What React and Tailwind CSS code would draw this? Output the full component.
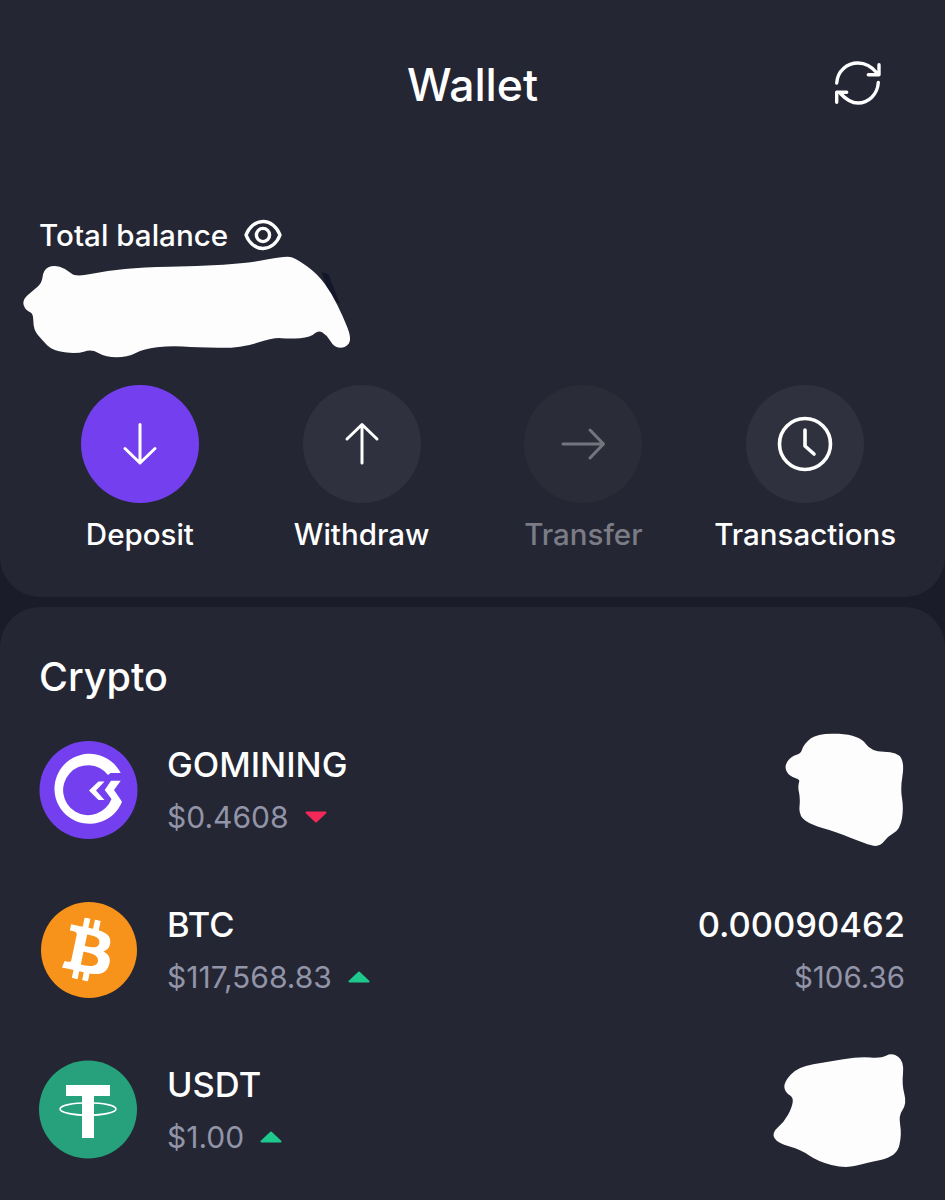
import { FaBtc } from "react-icons/fa";

// Hand-painted cover-up blobs; points are in 3x units so the viewBox does the scaling.
const BALANCE_BLOB = "105,90 130,78 165,88 195,115 290,95 400,85 560,82 720,72 830,50 860,60 920,105 960,160 995,230 1020,295 1005,316 975,316 955,280 925,262 900,285 840,290 790,285 690,318 560,315 480,310 400,320 350,345 290,345 245,320 200,335 130,325 100,295 75,265 75,215 50,205 42,180 70,155 100,130";
const GOMINING_BLOB = "380,70 420,38 540,45 575,95 655,95 672,130 660,200 670,260 660,320 625,340 600,372 560,360 470,325 400,305 365,280 370,230 362,195 370,170 335,160 322,135 340,108 370,100";
const USDT_BLOB = "320,1095 360,1050 450,1035 540,1020 610,1025 640,1008 672,1030 665,1100 680,1155 655,1190 665,1250 650,1310 560,1330 500,1345 420,1325 370,1290 300,1270 285,1245 320,1215 345,1170 350,1135 325,1120";

// Turns a point list into a closed curve running through the midpoints of its edges.
function smoothPath(points) {
  const pts = points.split(" ").map((p) => p.split(",").map(Number));
  const mid = (a, b) => [(a[0] + b[0]) / 2, (a[1] + b[1]) / 2];
  const start = mid(pts[pts.length - 1], pts[0]);
  let d = `M${start[0]} ${start[1]}`;
  pts.forEach((p, i) => {
    const m = mid(p, pts[(i + 1) % pts.length]);
    d += `Q${p[0]} ${p[1]} ${m[0]} ${m[1]}`;
  });
  return d + "Z";
}

function Blob({ points, viewBox, className, children }) {
  return (
    <svg viewBox={viewBox} className={className}>
      {children}
      <path d={smoothPath(points)} fill="#fdfdfd" stroke="#fdfdfd" strokeWidth="10" strokeLinejoin="round" />
    </svg>
  );
}

function RefreshIcon() {
  return (
    <svg viewBox="0 0 64 64" className="w-16 h-16" fill="none" stroke="#fff" strokeWidth="3.4" strokeLinecap="round" strokeLinejoin="round">
      <path d="M11.7 30C12.5 18 22 10 33 10C41 10 47 14 52 20" />
      <path d="M54 11.7V21.7H43.3" />
      <path d="M53.3 29.5C52.5 42 43 50 33 50C26 50 20.5 46 15.5 40.5" />
      <path d="M11.7 49.3V39.3H21.7" />
    </svg>
  );
}

function EyeIcon() {
  return (
    <svg viewBox="0 0 40 32" className="w-10 h-8" fill="none" stroke="#fff" strokeWidth="3.4">
      <path d="M3 16C6 8 12.5 2.5 20 2.5C27.5 2.5 34 8 37 16C34 24 27.5 29.5 20 29.5C12.5 29.5 6 24 3 16Z" strokeLinejoin="round" />
      <circle cx="20" cy="16" r="6.6" />
    </svg>
  );
}

function ActionIcon({ name, color }) {
  const common = { fill: "none", stroke: color, strokeWidth: 3, strokeLinecap: "round", strokeLinejoin: "round" };
  return (
    <svg viewBox="0 0 60 60" className="w-[60px] h-[60px]" {...common}>
      {name === "down" && <path d="M30 10.5V49M15 34.5L30 49L45 34.5" />}
      {name === "up" && <path d="M30 49V10.5M15 25L30 10.5L45 25" />}
      {name === "right" && <path d="M10 30H50.5M37 16L50.5 30L37 44" />}
      {name === "clock" && (
        <g strokeWidth="3.6">
          <circle cx="30" cy="30" r="25.5" />
          <path d="M30 16V32L39 40" />
        </g>
      )}
    </svg>
  );
}

function GoMiningLogo() {
  return (
    <svg viewBox="0 0 100 100" className="w-[100px] h-[100px]">
      <circle cx="49.5" cy="50" r="49" fill="#7440ef" />
      <path
        d="M81.7 33A35 35 0 1 0 83 61.7L75 50L81.7 40.7H72L65.7 50L72.5 59A25 25 0 1 1 69 35L71.7 33Z"
        fill="#fff"
      />
      <path d="M59.5 41.5L50 50.5L59.5 60H65.5L57 50.5L65.5 41.5Z" fill="#fff" />
    </svg>
  );
}

function BtcLogo() {
  return (
    <div className="w-[96px] h-[96px] rounded-full bg-[#f7931a] flex items-center justify-center">
      <FaBtc className="text-white w-[62px] h-[62px] rotate-[12deg]" />
    </div>
  );
}

function TetherLogo() {
  return (
    <svg viewBox="0 0 100 100" className="w-[100px] h-[100px]">
      <circle cx="49" cy="49.5" r="49" fill="#26a17b" />
      <rect x="27" y="25" width="44" height="11" fill="#fff" />
      <rect x="43" y="36" width="12" height="42" fill="#fff" />
      <ellipse cx="49" cy="49" rx="28" ry="6.2" fill="none" stroke="#fff" strokeWidth="1.6" />
    </svg>
  );
}

function Trend({ up }) {
  return (
    <svg viewBox="0 0 22 12" className="w-[22px] h-3 ml-4">
      {up ? (
        <path d="M11 1.5L20.5 10.5H1.5Z" fill="#1fc98e" stroke="#1fc98e" strokeWidth="2" strokeLinejoin="round" />
      ) : (
        <path d="M1.5 1.5H20.5L11 10.5Z" fill="#f4295a" stroke="#f4295a" strokeWidth="2" strokeLinejoin="round" />
      )}
    </svg>
  );
}

const actions = [
  { icon: "down", label: "Deposit", circle: "bg-[#7440ef]", text: "text-white", stroke: "#fff" },
  { icon: "up", label: "Withdraw", circle: "bg-[#2f313e]", text: "text-white", stroke: "#fff" },
  { icon: "right", label: "Transfer", circle: "bg-[#2a2c38]", text: "text-[#7b7c85]", stroke: "#74757e" },
  { icon: "clock", label: "Transactions", circle: "bg-[#2f313e]", text: "text-white", stroke: "#fff" },
];

function CoinRow({ logo, name, price, up, children }) {
  return (
    <div className="h-[160px] flex items-center justify-between">
      <div className="flex items-center">
        <div className="w-[100px] flex justify-center -ml-[1px]">{logo}</div>
        <div className="ml-[28px]">
          <div className="text-[34.5px] leading-[52px] font-[450] text-white translate-y-px">{name}</div>
          <div className="flex items-center text-[30px] leading-[52px] text-[#9294a8] translate-y-px">
            {price}
            <Trend up={up} />
          </div>
        </div>
      </div>
      {children}
    </div>
  );
}

export default function App() {
  return (
    <div className="w-[945px] h-[1200px] overflow-hidden bg-[#1a1c29] font-['Inter',sans-serif]">
      <header className="h-[170px] bg-[#242634] grid grid-cols-[1fr_auto_1fr] items-center px-[56px]">
        <div />
        <h1 className="text-[44.5px] font-medium text-white leading-none">Wallet</h1>
        <div className="justify-self-end">
          <RefreshIcon />
        </div>
      </header>

      <section className="h-[427px] bg-[#242634] rounded-b-[40px] pt-[46px]">
        <div className="px-10">
          <div className="h-[38px] flex items-center text-[29.6px] font-[450] text-white -ml-px">
            Total balance
            <span className="ml-[15px]">
              <EyeIcon />
            </span>
          </div>
          <Blob points={BALANCE_BLOB} viewBox="30 40 1002 315" className="block w-[334px] h-[105px] -ml-5 mb-[26px]">
            <polygon points="935,95 955,100 990,190 960,170" fill="#14162a" />
          </Blob>
        </div>
        <div className="grid grid-cols-4 px-[29px]">
          {actions.map((a) => (
            <div key={a.label} className="flex flex-col items-center">
              <div className={`w-[118px] h-[118px] rounded-full flex items-center justify-center ${a.circle}`}>
                <ActionIcon name={a.icon} color={a.stroke} />
              </div>
              <div className={`mt-[11px] text-[29.5px] leading-10 font-medium whitespace-nowrap ${a.text}`}>{a.label}</div>
            </div>
          ))}
        </div>
      </section>

      <section className="mt-[10px] h-[593px] bg-[#242634] rounded-t-[40px] px-10">
        <h2 className="pt-[48px] h-[103px] text-[39.5px] leading-[44px] font-medium text-white -ml-px">Crypto</h2>
        <CoinRow logo={<GoMiningLogo />} name="GOMINING" price="$0.4608" up={false}>
          <Blob points={GOMINING_BLOB} viewBox="310 25 375 360" className="block w-[125px] h-[120px] -mr-[2px]" />
        </CoinRow>
        <CoinRow logo={<BtcLogo />} name="BTC" price="$117,568.83" up>
          <div className="text-right translate-y-px">
            <div className="text-[34.5px] leading-[52px] font-[450] text-white">0.00090462</div>
            <div className="text-[29.5px] leading-[52px] text-[#9294a8]">$106.36</div>
          </div>
        </CoinRow>
        <CoinRow logo={<TetherLogo />} name="USDT" price="$1.00" up>
          <Blob points={USDT_BLOB} viewBox="275 995 410 360" className="block w-[137px] h-[120px] -mr-[2px]" />
        </CoinRow>
      </section>
    </div>
  );
}
